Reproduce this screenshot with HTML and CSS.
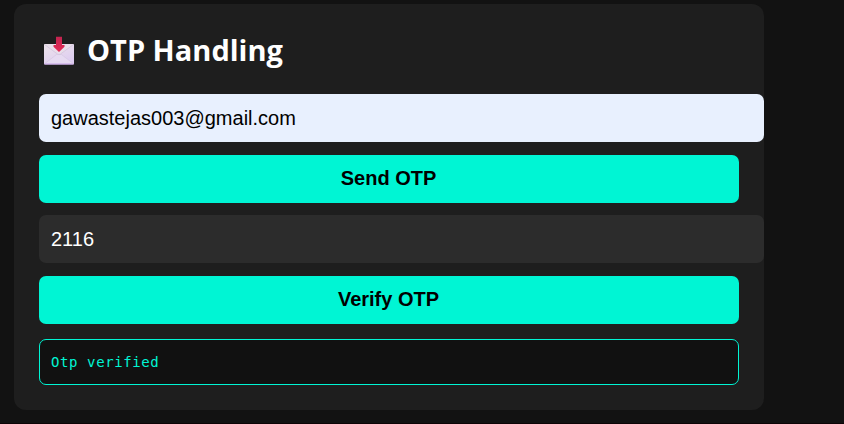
FILE: index.html
```html
<!DOCTYPE html>
<html lang="en">
<head>
<meta charset="utf-8">
<title>OTP Handling</title>
<link rel="stylesheet" href="styles.css">
</head>
<body>
<main class="card">
  <h1 class="title">
    <svg class="icon" viewBox="0 0 30 29" aria-hidden="true">
      <defs>
        <linearGradient id="paper" x1="0" y1="0" x2="0.6" y2="1"><stop offset="0" stop-color="#eee4ea"/><stop offset="1" stop-color="#ddccf0"/></linearGradient>
        <linearGradient id="arrow" x1="0" y1="0" x2="0" y2="1"><stop offset="0" stop-color="#c3244f"/><stop offset="1" stop-color="#e52b57"/></linearGradient>
      </defs>
      <rect y="8" width="30" height="20.5" rx="1" fill="url(#paper)"/>
      <path d="M.5 27.8 12.5 18.5h5l12 9.3" fill="#e6daf1" stroke="#d3c5df" stroke-width=".6"/>
      <path d="M.5 8.5 13.5 18q1.5 1 3 0l13-9.5" fill="#e9deea" stroke="#cfc0da" stroke-width=".7"/>
      <path d="M.5 28h29" stroke="#c9a5e8" stroke-width="1"/>
      <path d="M12 .7h6v8.300h2.500v1.800L15 16l-5.500-5.200V9H12z" fill="url(#arrow)"/>
    </svg>
    <span class="label">OTP Handling</span>
  </h1>
  <input class="field filled" type="text" value="gawastejas003@gmail.com" aria-label="Email">
  <button class="button">Send OTP</button>
  <input class="field" type="text" value="2116" aria-label="OTP">
  <button class="button verify">Verify OTP</button>
  <div class="result">Otp verified</div>
</main>
</body>
</html>
```
FILE: styles.css
```css
html { background: #121212; }
body {
  margin: 0;
  height: 424px;
  box-sizing: border-box;
  padding: 4px 0 0 14px;
  overflow: hidden;
  border-bottom: 1px solid #0c0406;
  font-family: "Liberation Sans", Arial, sans-serif;
}
.card {
  box-sizing: border-box;
  width: 750px;
  height: 406px;
  padding: 25px;
  border-radius: 12px;
  background: #1e1e1e;
  display: flex;
  flex-direction: column;
}
.title {
  margin: 0 0 25px 5px;
  height: 40px;
  display: flex;
  gap: 13px;
  color: #fff;
  font: 700 29px/36px "Open Sans", "Noto Sans", sans-serif;
}
.icon { width: 30px; height: 29px; margin-top: 7px; }
.label { padding-top: 3px; }
.field {
  box-sizing: border-box;
  width: 725px;
  height: 48px;
  flex: none;
  margin: 0 0 13px;
  padding: 0 12px;
  border: 0;
  border-radius: 7px;
  background: #2c2c2c;
  color: #fff;
  font: 20px "Liberation Sans", Arial, sans-serif;
}
.filled { background: #e8f0fe; color: #000; }
.button {
  height: 48px;
  flex: none;
  margin: 0 0 12px;
  padding: 0 1px 2px 0;
  border: 0;
  border-radius: 7px;
  background: #00f5d4;
  color: #000;
  font: 700 20px "Liberation Sans", Arial, sans-serif;
}
.verify { margin-bottom: 15px; }
.result {
  box-sizing: border-box;
  height: 46px;
  padding: 0 11px;
  border: 1px solid #00f5d4;
  border-radius: 7px;
  background: #111;
  color: #00f5d4;
  font: 14px/44px "DejaVu Sans Mono", monospace;
  letter-spacing: .6px;
}
```
